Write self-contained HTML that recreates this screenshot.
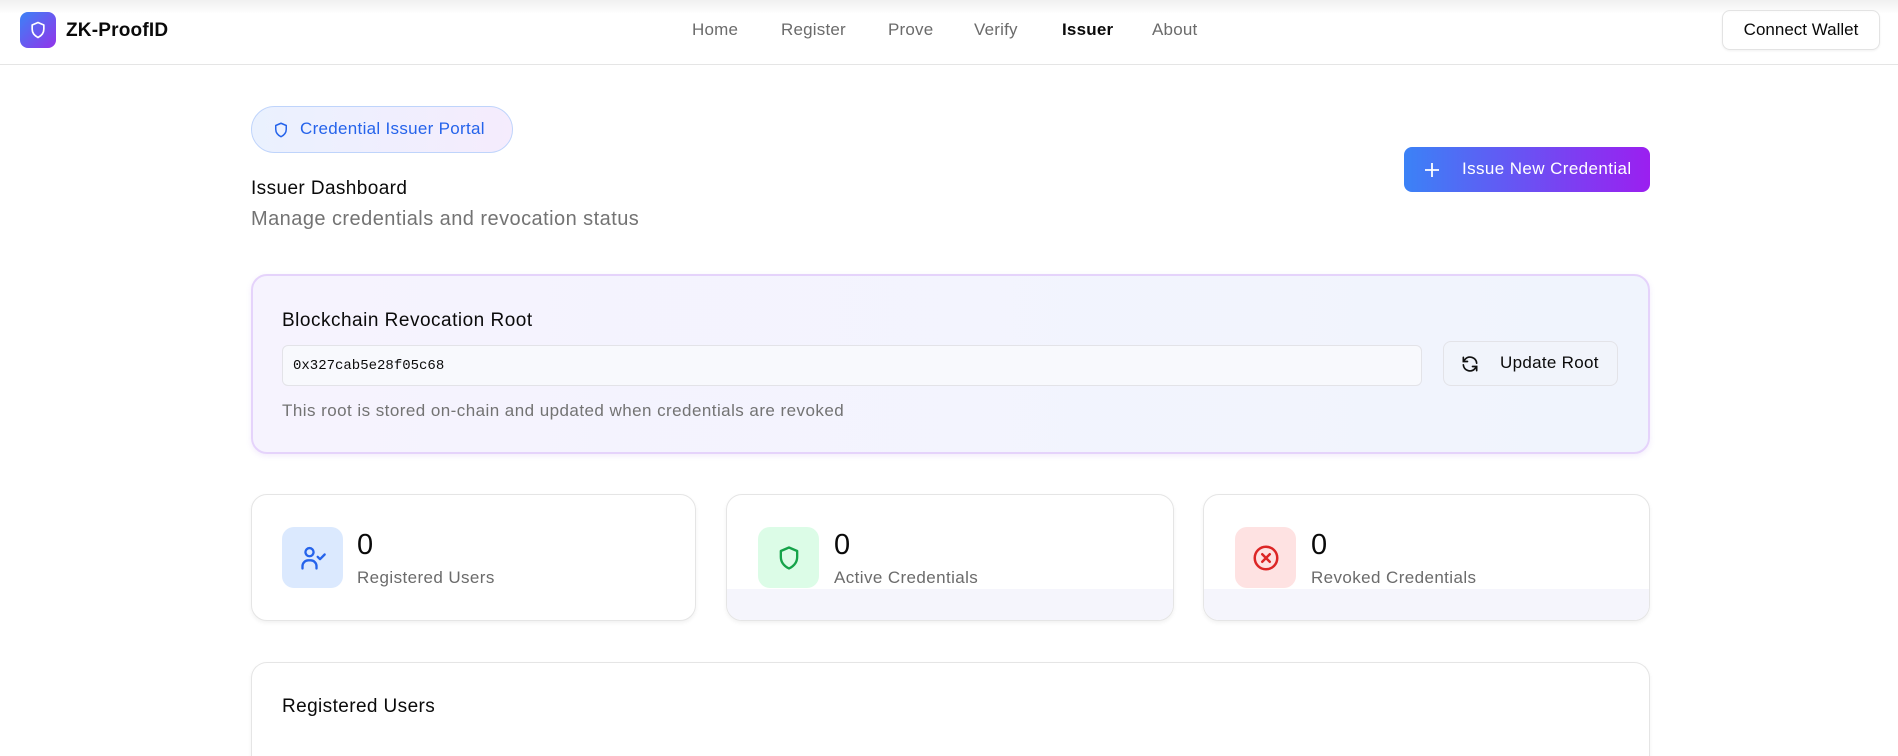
<!DOCTYPE html>
<html><head><meta charset="utf-8"><style>
*{box-sizing:border-box;margin:0;padding:0}
html,body{width:1898px;height:756px;overflow:hidden}
body{background:#fff;font-family:"Liberation Sans",sans-serif;color:#0a0a0a;position:relative;line-height:1.2}
.abs{position:absolute}
.nav{left:0;top:0;width:1898px;height:65px;border-bottom:1px solid #e5e5e5;background:linear-gradient(#f0f0f0 0,#fff 14px)}
.logo{left:20px;top:12px;width:36px;height:36px;border-radius:8px;background:linear-gradient(135deg,#3b82f6,#9333ea);display:flex;align-items:center;justify-content:center}
.brand{left:66px;top:20px;font-size:19px;font-weight:bold;letter-spacing:0.2px}
.link{top:20px;font-size:17px;color:#6b6b6b;letter-spacing:0.2px}
.cw{left:1722px;top:10px;width:158px;height:40px;border:1px solid #e3e3e3;border-radius:8px;font-size:17px;display:flex;align-items:center;justify-content:center;box-shadow:0 1px 2px rgba(0,0,0,.06)}
.badge{left:251px;top:106px;width:262px;height:47px;border:1px solid #bfd4fb;border-radius:24px;background:linear-gradient(90deg,#eaf1fe,#f5ecfd);display:flex;align-items:center;padding-left:20px;gap:10px;color:#2563eb;font-size:17px;letter-spacing:0.3px}
.card{border:1px solid #e5e5e5;border-radius:16px;box-shadow:0 2px 4px rgba(0,0,0,.06);background:#fff;overflow:hidden}
.ibox{width:61px;height:61px;border-radius:12px;display:flex;align-items:center;justify-content:center}
.num{font-size:29px}
.lbl{font-size:17px;color:#6b6b6b;letter-spacing:0.4px}
</style></head><body>
<div class="abs nav"></div>
<div class="abs logo"><svg width="20" height="20" viewBox="0 0 24 24" fill="none" stroke="#fff" stroke-width="2" stroke-linejoin="round"><path d="M12 3l7 3v5c0 5-3 8-7 10-4-2-7-5-7-10V6z"/></svg></div>
<div class="abs brand">ZK-ProofID</div>
<div class="abs link" style="left:692px">Home</div>
<div class="abs link" style="left:781px">Register</div>
<div class="abs link" style="left:888px">Prove</div>
<div class="abs link" style="left:974px">Verify</div>
<div class="abs link" style="left:1062px;color:#0a0a0a;font-weight:bold">Issuer</div>
<div class="abs link" style="left:1152px">About</div>
<div class="abs cw">Connect Wallet</div>

<div class="abs badge"><svg width="18" height="18" viewBox="0 0 24 24" fill="none" stroke="#2563eb" stroke-width="2" stroke-linejoin="round"><path d="M12 3l7 3v5c0 5-3 8-7 10-4-2-7-5-7-10V6z"/></svg>Credential Issuer Portal</div>
<div class="abs" style="left:251px;top:178px;font-size:19px;letter-spacing:0.4px">Issuer Dashboard</div>
<div class="abs" style="left:251px;top:207px;font-size:20px;color:#737373;letter-spacing:0.45px">Manage credentials and revocation status</div>
<div class="abs" style="left:1404px;top:147px;width:246px;height:45px;border-radius:8px;background:linear-gradient(90deg,#3b82f6,#9b1ff0);color:#fff;font-size:17px;display:flex;align-items:center;padding-left:20px;letter-spacing:0.4px"><svg width="16" height="16" viewBox="0 0 16 16" stroke="#fff" stroke-width="1.8"><path d="M8 1v14M1 8h14"/></svg><span style="margin-left:22px">Issue New Credential</span></div>

<div class="abs" style="left:251px;top:274px;width:1399px;height:180px;border:2px solid #e5d3fb;border-radius:16px;background:linear-gradient(90deg,#f6f3fe,#f0f4fd);box-shadow:0 2px 6px rgba(150,100,220,.12)"></div>
<div class="abs" style="left:282px;top:310px;font-size:19px;letter-spacing:0.5px">Blockchain Revocation Root</div>
<div class="abs" style="left:282px;top:345px;width:1140px;height:41px;border:1px solid #e3e3e8;border-radius:6px;background:#f8f9fd;font-family:'Liberation Mono',monospace;font-size:14px;padding:12px 10px">0x327cab5e28f05c68</div>
<div class="abs" style="left:1443px;top:341px;width:175px;height:45px;border:1px solid #e3e3e8;border-radius:8px;background:#f1f4fb;display:flex;align-items:center;padding-left:16px;font-size:17px;letter-spacing:0.3px"><svg width="20" height="20" viewBox="0 0 24 24" fill="none" stroke="#111" stroke-width="2" stroke-linecap="round"><path d="M20 11a8 8 0 0 0-14-4.5L4 9M4 4v5h5M4 13a8 8 0 0 0 14 4.5L20 15M20 20v-5h-5"/></svg><span style="margin-left:20px">Update Root</span></div>
<div class="abs" style="left:282px;top:401px;font-size:17px;color:#737373;letter-spacing:0.45px">This root is stored on-chain and updated when credentials are revoked</div>

<div class="abs card" style="left:251px;top:494px;width:445px;height:127px"></div>
<div class="abs card" style="left:726px;top:494px;width:448px;height:127px"><div style="position:absolute;left:0;right:0;top:94px;bottom:0;background:#f5f5fc"></div></div>
<div class="abs card" style="left:1203px;top:494px;width:447px;height:127px"><div style="position:absolute;left:0;right:0;top:94px;bottom:0;background:#f5f5fc"></div></div>

<div class="abs ibox" style="left:282px;top:527px;background:#dbe9fe"><svg width="28" height="28" viewBox="0 0 24 24" fill="none" stroke="#2563eb" stroke-width="2" stroke-linecap="round" stroke-linejoin="round"><circle cx="9" cy="7" r="3.5"/><path d="M3 21v-2a5 5 0 0 1 5-5h2a5 5 0 0 1 5 5v2"/><path d="M16 11l2 2 4-4"/></svg></div>
<div class="abs num" style="left:357px;top:528px">0</div>
<div class="abs lbl" style="left:357px;top:568px">Registered Users</div>

<div class="abs ibox" style="left:758px;top:527px;background:#dcfce7"><svg width="28" height="28" viewBox="0 0 24 24" fill="none" stroke="#16a34a" stroke-width="2" stroke-linejoin="round"><path d="M12 3l7 3v5c0 5-3 8-7 10-4-2-7-5-7-10V6z"/></svg></div>
<div class="abs num" style="left:834px;top:528px">0</div>
<div class="abs lbl" style="left:834px;top:568px">Active Credentials</div>

<div class="abs ibox" style="left:1235px;top:527px;background:#fee2e2"><svg width="30" height="30" viewBox="0 0 24 24" fill="none" stroke="#dc2626" stroke-width="2" stroke-linecap="round"><circle cx="12" cy="12" r="9"/><path d="M9 9l6 6M15 9l-6 6"/></svg></div>
<div class="abs num" style="left:1311px;top:528px">0</div>
<div class="abs lbl" style="left:1311px;top:568px">Revoked Credentials</div>

<div class="abs card" style="left:251px;top:662px;width:1399px;height:94px;border-bottom:none;border-radius:16px 16px 0 0"></div>
<div class="abs" style="left:282px;top:696px;font-size:19px;letter-spacing:0.4px">Registered Users</div>
</body></html>
